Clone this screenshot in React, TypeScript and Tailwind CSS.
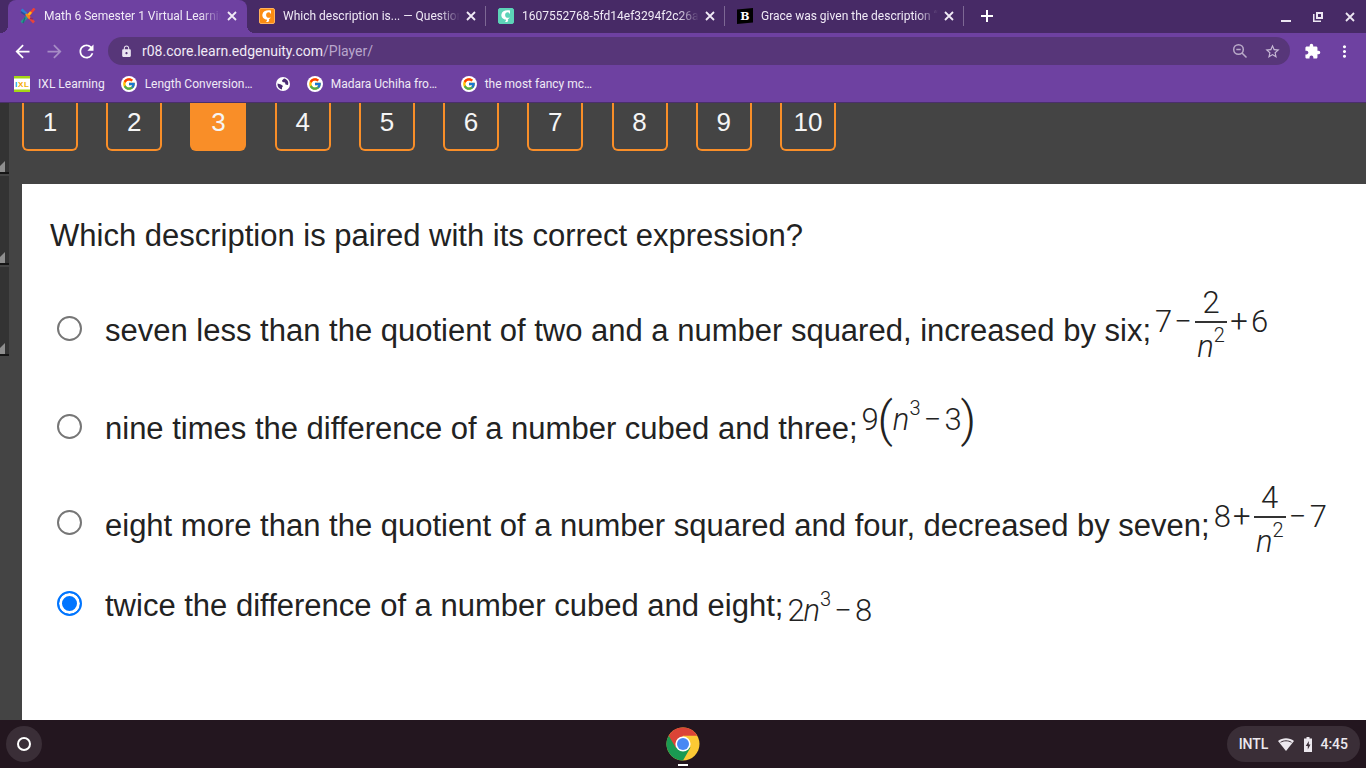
import { useState } from 'react'
import type { ReactNode } from 'react'
import {
  MdArrowBack,
  MdArrowForward,
  MdExtension,
  MdLock,
  MdMoreVert,
  MdRefresh,
  MdStarBorder,
} from 'react-icons/md'
import { FcGoogle } from 'react-icons/fc'
import clsx from 'clsx'

const EdgenuityIcon = () => (
  <svg viewBox="0 0 16 16" className="size-4 shrink-0" fill="none" strokeWidth="2.6">
    <path d="M1.5 1.5 8 7.5" stroke="#2f7fd0" />
    <path d="M1 4 8 8.5" stroke="#2b4f9c" strokeWidth="1.5" />
    <path d="M14.5 .5 8 8" stroke="#ee4035" />
    <path d="M11 4 7 9" stroke="#fdb913" />
    <path d="M8 8 1.5 14.5" stroke="#2a9d8f" />
    <path d="M5 9.5 3 15" stroke="#1c6f78" strokeWidth="1.5" />
    <path d="M8 8 14 14.5" stroke="#e8443a" />
    <path d="m6 6 4 4.5" stroke="#f58220" />
    <path d="m10 10 3 1" stroke="#8c2b6b" strokeWidth="1.5" />
  </svg>
)

const BrainlyIcon = ({ color, edge }: { color: string; edge: string }) => (
  <svg viewBox="0 0 16 16" className="size-4 shrink-0">
    <rect x=".5" y=".5" width="15" height="15" rx="1.5" fill={color} stroke={edge} />
    <path d="M12 2.500V6L10.600 4.600C8.800 3.800 7 5.200 7.100 7.300 7.200 9.400 9 10.400 12 9.600L9.800 11.500 10.200 12.400C9.800 14 8.500 14.200 7 13.900L8 12.500 7.800 11.500C4.800 11.200 3 9 3.400 6.400 3.900 3 7.800 1.600 12 2.500Z" fill="#fff" />
  </svg>
)

const BartlebyIcon = () => (
  <svg viewBox="0 0 16 16" className="size-4 shrink-0">
    <path d="M0 1.500 16 0V14.500L0 16Z" fill="#000" />
    <text x="8" y="12" textAnchor="middle" fill="#fff" fontSize="11" fontWeight="700" fontFamily="DejaVu Serif, serif">
      B
    </text>
  </svg>
)

const IxlIcon = () => (
  <svg viewBox="0 0 16 16" className="size-4 shrink-0">
    <path fill="#fff" d="M0 0h16v16H0z" />
    <path fill="#a4d515" d="M0 0h16v2.500H0zM0 13.500h16V16H0z" />
    <g fontSize="8" fontWeight="700" fontFamily="Liberation Sans, sans-serif">
      <text x="1" y="11" fill="#11a5d8">I</text>
      <text x="4" y="11" fill="#f5a800">X</text>
      <text x="10" y="11" fill="#f0b400">L</text>
    </g>
  </svg>
)

const GlobeIcon = () => (
  <svg viewBox="0 0 16 16" className="size-4 shrink-0">
    <circle cx="8" cy="8" r="7" fill="#fff" />
    <path d="M2.500 7.500 6 8.500 8 10 7 11.500V13.500C4 13 2.300 10.500 2.500 7.500ZM9 2.500 7 4.500 7.500 6 10 6.500 10.500 8.500 13 9C14 6 12.500 3.200 9 2.500Z" fill="#4a2b73" />
  </svg>
)

const GoogleIcon = () => (
  <span className="flex size-4 shrink-0 items-center justify-center rounded-full bg-white">
    <FcGoogle size={14} />
  </span>
)

const CloseIcon = () => (
  <svg viewBox="0 0 14 14" className="size-3.5" fill="none" stroke="currentColor" strokeWidth="1.8">
    <path d="m3 3 8 8M11 3l-8 8" />
  </svg>
)

const PlusIcon = () => (
  <svg viewBox="0 0 14 14" className="size-3.5" fill="none" stroke="currentColor" strokeWidth="2">
    <path d="M7 1v12M1 7h12" />
  </svg>
)

const ZoomOutIcon = () => (
  <svg viewBox="0 0 16 16" className="size-4" fill="none" stroke="#b9aac8" strokeWidth="1.500">
    <circle cx="6.500" cy="6.500" r="4.800" />
    <path d="m10 10 4.500 4.500M4.300 6.500h4.400" />
  </svg>
)

const ChromeIcon = () => (
  <svg viewBox="0 0 34 34" className="size-[34px]">
    <circle cx="17" cy="17" r="16.500" fill="#fcc934" />
    <path d="M17 17 2.700 8.750A16.500 16.500 0 0 0 17 33.500L24.500 20.500Z" fill="#1a9a52" />
    <path d="M2.700 8.750A16.500 16.500 0 0 1 31.300 8.750H17L10 21Z" fill="#db4437" />
    <circle cx="17" cy="17" r="7.600" fill="#fff" />
    <circle cx="17" cy="17" r="6" fill="#4688f4" />
  </svg>
)

const tabs = [
  { title: 'Math 6 Semester 1 Virtual Learning', icon: <EdgenuityIcon /> },
  { title: 'Which description is... — Question', icon: <BrainlyIcon color="#fb8c12" edge="#ffb25c" /> },
  { title: '1607552768-5fd14ef3294f2c26a9', icon: <BrainlyIcon color="#5dd3b8" edge="#5dd3b8" /> },
  { title: 'Grace was given the description “', icon: <BartlebyIcon /> },
]

const bookmarks = [
  { title: 'IXL Learning', icon: <IxlIcon />, className: '' },
  { title: 'Length Conversion…', icon: <GoogleIcon />, className: 'w-[138px]' },
  { title: '', icon: <GlobeIcon />, className: '' },
  { title: 'Madara Uchiha fro…', icon: <GoogleIcon />, className: 'w-[138px]' },
  { title: 'the most fancy mc…', icon: <GoogleIcon />, className: 'w-[138px]' },
]

const TabStrip = () => (
  <div className="flex h-[33px] items-stretch bg-[#472a66] pl-2">
    {tabs.map((tab, index) => (
      <div
        key={tab.title}
        className={clsx(
          'relative flex w-[239px] items-center gap-2 pr-2 pb-px pl-3',
          index === 0 && 'rounded-t-lg bg-[#6e41a1]'
        )}
      >
        {index === 0 && (
          <>
            <span className="absolute bottom-0 -left-2 size-2 bg-[radial-gradient(circle_at_0_0,#472a66_8px,#6e41a1_8px)]" />
            <span className="absolute -right-2 bottom-0 size-2 bg-[radial-gradient(circle_at_100%_0,#472a66_8px,#6e41a1_8px)]" />
          </>
        )}
        {tab.icon}
        <a
          href="#"
          className="-mr-1 min-w-0 flex-1 overflow-hidden mask-r-from-88% text-xs whitespace-nowrap text-[#f0eaf6]"
        >
          {tab.title}
        </a>
        <button aria-label="Close tab" className="text-[#f0eaf6]">
          <CloseIcon />
        </button>
        {index > 0 && <span className="absolute right-0 h-5 w-px bg-[#7d6894]" />}
      </div>
    ))}
    <button aria-label="New tab" className="flex w-[46px] items-center justify-center pb-px text-white">
      <PlusIcon />
    </button>
    <div className="ml-auto flex">
      <button aria-label="Minimize" className="flex w-8 items-center justify-center">
        <span className="mt-2 h-0.5 w-2.5 bg-[#ece6f2]" />
      </button>
      <button aria-label="Restore" className="flex w-8 items-center justify-center">
        <svg viewBox="0 0 10 10" className="size-2.5" fill="none" stroke="#ece6f2">
          <path d="M4 1h5v5H4z" strokeWidth="2" />
          <path d="M.75 2v7.250H8" strokeWidth="1.500" />
        </svg>
      </button>
      <button aria-label="Close window" className="flex w-8 items-center justify-center text-[#ece6f2]">
        <CloseIcon />
      </button>
    </div>
  </div>
)

const Toolbar = () => (
  <div className="flex h-9 items-center pr-1.5 pl-1.5 text-white">
    <button aria-label="Back" className="flex w-8 justify-center">
      <MdArrowBack size={21} />
    </button>
    <button aria-label="Forward" className="flex w-8 justify-center text-[#a68cc5]">
      <MdArrowForward size={21} />
    </button>
    <button aria-label="Reload" className="flex w-8 justify-center">
      <MdRefresh size={21} />
    </button>
    <div className="ml-1.5 flex h-7 flex-1 items-center gap-4 rounded-full bg-[#573679] pr-2.5 pl-3">
      <p className="flex flex-1 items-center text-sm text-[#f0eaf6]">
        <MdLock size={13} className="mr-[9px] text-[#ece6f2]" />
        r08.core.learn.edgenuity.com<span className="text-[#b9a6cc]">/Player/</span>
      </p>
      <button aria-label="Zoom" className="flex w-4 justify-center">
        <ZoomOutIcon />
      </button>
      <button aria-label="Bookmark this page" className="flex w-4 justify-center text-[#c8bad6]">
        <MdStarBorder size={17} className="shrink-0" />
      </button>
    </div>
    <button aria-label="Extensions" className="ml-1.5 flex w-8 justify-center">
      <MdExtension size={17} />
    </button>
    <button aria-label="Menu" className="flex w-8 justify-center">
      <MdMoreVert size={19} />
    </button>
  </div>
)

const BookmarksBar = () => (
  <nav className="flex h-[33px] items-center gap-4 pb-1 pl-3.5 text-xs text-[#f0eaf6]">
    {bookmarks.map((bookmark, index) => (
      <a
        key={index}
        href="#"
        aria-label={bookmark.title || 'Bookmark'}
        className={clsx('flex items-center gap-2 whitespace-nowrap', bookmark.className)}
      >
        {bookmark.icon}
        {bookmark.title}
      </a>
    ))}
  </nav>
)

const SideRail = () => (
  <aside className="w-[22px] shrink-0">
    {[0, 1, 2].map((item) => (
      <div
        key={item}
        className={clsx(
          'mb-0.5 flex w-[9px] items-end border-b-2 border-[#151515] bg-[#333]',
          item === 0 ? 'h-[71px]' : 'h-[89px]'
        )}
      >
        <svg viewBox="0 0 5 11" className="h-[11px] w-[5px]">
          <path d="M5 0v11H0V5Z" fill="#8e8e8e" />
        </svg>
      </div>
    ))}
  </aside>
)

const Num = ({ children }: { children: ReactNode }) => <span className="w-4 text-center">{children}</span>

const Op = ({ children }: { children: ReactNode }) => <span className="w-6 text-center">{children}</span>

const Power = ({ exponent }: { exponent: number }) => (
  <span className="flex">
    <i>n</i>
    <sup className="top-0 -mt-2 text-xl leading-6">{exponent}</sup>
  </span>
)

const Fraction = ({ top, exponent }: { top: number; exponent: number }) => (
  <span className="flex w-8 flex-col items-center">
    <span className="h-9 leading-9">{top}</span>
    <span className="h-0.5 w-full bg-[#333]" />
    <span className="h-9 pt-2">
      <Power exponent={exponent} />
    </span>
  </span>
)

const options = [
  {
    text: 'seven less than the quotient of two and a number squared, increased by six;',
    rowClass: 'h-[98px]',
    mathClass: 'pb-3',
    math: (
      <>
        <Num>7</Num>
        <Op>−</Op>
        <Fraction top={2} exponent={2} />
        <Op>+</Op>
        <Num>6</Num>
      </>
    ),
  },
  {
    text: 'nine times the difference of a number cubed and three;',
    rowClass: 'h-[98px]',
    mathClass: 'pb-3',
    math: (
      <>
        <Num>9</Num>
        <span className="text-5xl leading-8 font-light">(</span>
        <Power exponent={3} />
        <Op>−</Op>
        <Num>3</Num>
        <span className="text-5xl leading-8 font-light">)</span>
      </>
    ),
  },
  {
    text: 'eight more than the quotient of a number squared and four, decreased by seven;',
    rowClass: 'h-[95px]',
    mathClass: 'pb-3',
    math: (
      <>
        <Num>8</Num>
        <Op>+</Op>
        <Fraction top={4} exponent={2} />
        <Op>−</Op>
        <Num>7</Num>
      </>
    ),
  },
  {
    text: 'twice the difference of a number cubed and eight;',
    rowClass: 'h-[66px]',
    mathClass: 'pt-4',
    math: (
      <>
        <Num>2</Num>
        <Power exponent={3} />
        <Op>−</Op>
        <Num>8</Num>
      </>
    ),
  },
]

const Quiz = () => {
  const [selected, setSelected] = useState(3)

  return (
    <section className="flex-1 bg-white pt-8 pl-7 text-[#222]">
      <h1 className="h-[63px] text-[31px] leading-10 whitespace-nowrap">
        Which description is paired with its correct expression?
      </h1>
      {options.map((option, index) => (
        <div key={option.text} className={clsx('flex items-center pl-[7px]', option.rowClass)}>
          <input
            type="radio"
            name="answer"
            id={`answer-${index}`}
            checked={selected === index}
            onChange={() => setSelected(index)}
            className="size-[25px] shrink-0 appearance-none rounded-full border-2 border-[#767676] bg-white checked:border-[#0075ff] checked:bg-[#0075ff] checked:shadow-[inset_0_0_0_3px_#fff]"
          />
          <label htmlFor={`answer-${index}`} className="flex items-center pl-[23px] whitespace-nowrap">
            <span className="pt-1.5 text-[31px] leading-10">{option.text}</span>
            <span
              className={clsx(
                "ml-1 flex items-center font-['Roboto',sans-serif] text-[31px] leading-8 font-light",
                option.mathClass
              )}
            >
              {option.math}
            </span>
          </label>
        </div>
      ))}
    </section>
  )
}

const Shelf = () => (
  <footer className="grid h-12 grid-cols-3 items-center bg-[#23161f] px-1.5 text-[#ece8ee]">
    <button aria-label="Launcher" className="flex size-9 items-center justify-center rounded-full bg-[#3a2e37]">
      <span className="size-3.5 rounded-full border-2 border-white" />
    </button>
    <button aria-label="Chrome" className="flex h-12 flex-col items-center justify-end gap-[3px] pb-0.5">
      <ChromeIcon />
      <span className="h-0.5 w-2.5 bg-white" />
    </button>
    <button className="ml-auto flex h-9 items-center rounded-full bg-[#3a2e37] px-3 text-sm font-medium">
      INTL
      <svg viewBox="0 0 16 13" className="ml-2.5 h-[13px] w-4">
        <path d="M8 13 0 3C4.500-.7 11.500-.7 16 3Z" fill="#ece8ee" />
        <path d="M2.500 4.300C5.800 2.300 10.200 2.300 13.500 4.300" fill="none" stroke="#3a2e37" />
      </svg>
      <svg viewBox="0 0 8 15" className="mr-2 ml-2.5 h-[15px] w-2">
        <path d="M2.500 0h3v1.500H8V15H0V1.500h2.500Z" fill="#ece8ee" />
        <path d="M4.800 4 1.800 9h2v3.500L6.500 7.500h-1.700Z" fill="#3a2e37" />
      </svg>
      4:45
    </button>
  </footer>
)

const App = () => (
  <div className="flex min-h-screen flex-col overflow-hidden bg-[#444] font-['Roboto',sans-serif]">
    <header className="border-b border-[#4b2f6c] bg-[#6e41a1]">
      <TabStrip />
      <Toolbar />
      <BookmarksBar />
    </header>
    <main className="flex flex-1 font-['Liberation_Sans',Arial,sans-serif]">
      <SideRail />
      <div className="flex min-w-0 flex-1 flex-col">
        <nav className="mb-[33px] flex w-[814px] justify-between">
          {[1, 2, 3, 4, 5, 6, 7, 8, 9, 10].map((question) => (
            <button
              key={question}
              className={clsx(
                'h-12 w-14 rounded-b-md border-2 border-t-0 border-[#f98e28] pb-2 text-[26px] text-[#f5f5f5]',
                question === 3 && 'bg-[#f98e28]'
              )}
            >
              {question}
            </button>
          ))}
        </nav>
        <Quiz />
      </div>
    </main>
    <Shelf />
  </div>
)

export default App
